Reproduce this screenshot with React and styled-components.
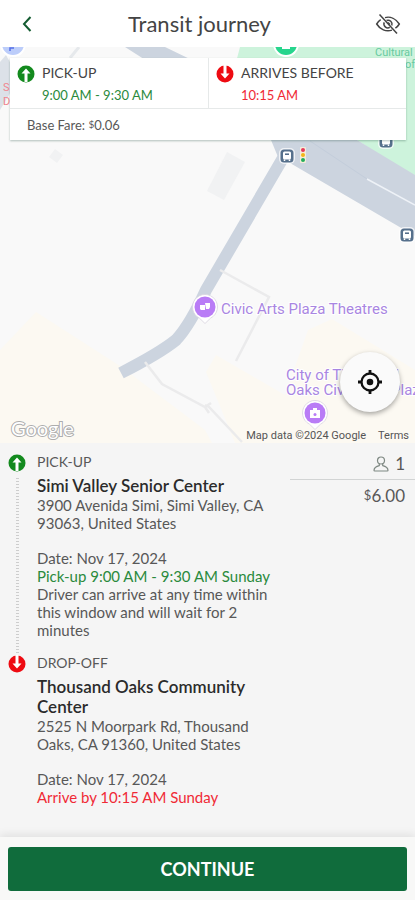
import React from 'react'
import styled, { createGlobalStyle } from 'styled-components'

//--Styles
const GlobalStyle = createGlobalStyle`
  * {
    box-sizing: border-box;
  }
  body {
    margin: 0;
    background: #f5f5f5;
    color: #585858;
    font-family: Lato, 'Open Sans', sans-serif;
  }
  h1, h2, h3, p {
    margin: 0;
  }
  button {
    font-family: inherit;
    border: 0;
    padding: 0;
    cursor: pointer;
  }
`
const Page = styled.div`
  display: flex;
  flex-direction: column;
  min-height: 100vh;
`
const HeaderTag = styled.header`
  display: flex;
  justify-content: space-between;
  align-items: center;
  height: 47px;
  padding: 0 14px;
  background: #fff;
`
const IconButton = styled.button`
  display: flex;
  align-items: center;
  justify-content: ${(props) => props.$align || 'center'};
  width: ${(props) => props.$width};
  height: 32px;
  background: none;
`
const Title = styled.h1`
  color: #444;
  font-size: 22px;
  font-weight: 400;
  line-height: 28px;
`
const MapArea = styled.section`
  position: relative;
  height: 396px;
  overflow: hidden;
  background: #f9f9f9;
`
const MapCanvas = styled.svg`
  display: block;
  width: 100%;
  height: 100%;
`
const Summary = styled.div`
  position: absolute;
  top: 11px;
  left: 10px;
  right: 9px;
  background: #fff;
  box-shadow: 0 1px 2px rgba(40, 80, 70, 0.35);
`
const SummaryTimes = styled.div`
  display: grid;
  grid-template-columns: 1fr 1fr;
  border-bottom: 1px solid #e6e9e9;
`
const SummaryTime = styled.div`
  display: flex;
  gap: 7px;
  height: 50px;
  padding: 6px 7px;

  & + & {
    border-left: 1px solid #e6e9e9;
  }
`
const SummaryLabel = styled.h2`
  color: #444;
  font-size: 14px;
  font-weight: 400;
  line-height: 18px;
`
const SummaryValue = styled.p`
  color: ${(props) => props.$color};
  font-size: 13px;
  line-height: 18px;
  padding-top: 4px;
`
const BaseFare = styled.p`
  padding: 6px 17px;
  font-size: 13px;
  line-height: 18px;
`
const StepIcon = styled.svg`
  display: block;
  flex: none;
  width: 18px;
  height: 18px;
  margin-top: 1px;
`
const LocateButton = styled.button`
  position: absolute;
  right: 15px;
  bottom: 31px;
  display: flex;
  align-items: center;
  justify-content: center;
  width: 60px;
  height: 60px;
  border-radius: 50%;
  background: #fafafa;
  box-shadow: 0 2px 5px rgba(0, 0, 0, 0.35);
`
const MapLegal = styled.div`
  position: absolute;
  right: 6px;
  bottom: 0;
  display: flex;
  gap: 12px;
  color: #555;
  font-family: Roboto, sans-serif;
  font-size: 11px;
  line-height: 15px;

  a {
    color: inherit;
    text-decoration: none;
  }
`
const Details = styled.main`
  display: flex;
  justify-content: space-between;
  align-items: flex-start;
  flex: 1;
  padding: 10px 0 16px 8px;
`
const Steps = styled.div`
  flex: 1;
  max-width: 270px;
`
const Step = styled.section`
  display: flex;
  gap: 11px;
`
const Rail = styled.div`
  display: flex;
  flex-direction: column;
  align-items: center;
  gap: 6px;
`
const Dots = styled.span`
  flex: 1;
  width: 3px;
  background: repeating-linear-gradient(#cdcdcd 0 1px, transparent 1px 3px);
`
const StepBody = styled.div`
  padding-bottom: 15px;
  font-size: 15px;
  line-height: 18px;
`
const StepLabel = styled.h2`
  font-size: 14px;
  font-weight: 400;
  line-height: 18px;
  padding-bottom: 5px;
`
const StepPlace = styled.h3`
  color: #2b2b2b;
  font-size: 17px;
  font-weight: 600;
  line-height: 20px;
`
const StepInfo = styled.div`
  padding-top: 17px;
`
const Highlight = styled.p`
  color: ${(props) => props.$color};
`
const Fare = styled.aside`
  width: 125px;
  text-align: right;
  font-size: 17px;
  line-height: 22px;
`
const FareRow = styled.div`
  display: flex;
  justify-content: flex-end;
  align-items: center;
  gap: 6px;
  padding: 0 10px 4px;

  & + & {
    border-top: 1px solid #d2d4d4;
    padding-top: 4px;
  }
`
const Price = styled.span`
  small {
    font-size: ${(props) => props.$sign};
    vertical-align: 2px;
  }
`
const Footer = styled.footer`
  padding: 10px 8px;
  background: #f8f8f7;
  box-shadow: 0 -3px 8px rgba(0, 0, 0, 0.08);
`
const ContinueButton = styled.button`
  display: block;
  width: 100%;
  height: 44px;
  border-radius: 3px;
  background: #106c3c;
  color: #fff;
  font-size: 18px;
  font-weight: 700;
`

const green = '#2a8a3c'
const red = '#f02a35'

//--Icons
const UpIcon = () => (
  <StepIcon viewBox="0 0 18 18" aria-hidden="true">
    <circle cx="9" cy="9" r="8.500" fill="#138a1e" />
    <path d="M9 3.500 13.500 8.500h-3V17h-3V8.500h-3z" fill="#fff" />
  </StepIcon>
)

const DownIcon = () => (
  <StepIcon viewBox="0 0 18 18" aria-hidden="true">
    <circle cx="9" cy="9" r="8.500" fill="#ee0b12" />
    <path d="M7.500 0h3v8.500h3L9 13.500 4.500 8.500h3z" fill="#fff" />
  </StepIcon>
)

const BackIcon = () => (
  <svg width="10" height="16" viewBox="0 0 10 16" aria-hidden="true">
    <path d="M8.500 1 2 8l6.500 7" fill="none" stroke="#145c31" strokeWidth="2" />
  </svg>
)

const EyeOffIcon = () => (
  <svg width="26" height="22" viewBox="0 0 26 22" fill="none" stroke="#444" strokeWidth="1.500" aria-hidden="true">
    <path d="M4.500 1.500 22 20.500" />
    <path d="M10 4.600c5.500-1.500 11 1.300 14.300 6.400-1 1.700-2.300 3.100-3.900 4.200M17 17.100C11 19 5 16.500 1.700 11c1-1.700 2.300-3.200 4-4.300" />
    <path d="M11.500 7.500a4 4 0 0 1 5.300 5M14.800 14.400a4 4 0 0 1-5.600-5M13 9.500l2 2" />
  </svg>
)

const LocateIcon = () => (
  <svg width="26" height="26" viewBox="0 0 26 26" fill="none" stroke="#111" aria-hidden="true">
    <circle cx="13" cy="13" r="8.500" strokeWidth="2.300" />
    <circle cx="13" cy="13" r="3.300" fill="#111" stroke="none" />
    <path d="M13 1v4M13 21v4M1 13h4M21 13h4" strokeWidth="2.800" />
  </svg>
)

const PersonIcon = () => (
  <svg width="16" height="16" viewBox="0 0 16 16" fill="none" stroke="#7f8983" strokeWidth="1.200" role="img" aria-label="Passengers">
    <circle cx="8" cy="4.500" r="3.500" />
    <path d="M6.300 7.600v2C3.200 10.300 1.200 11.700 1 14.200c0 .5.300.8.800.8h12.400c.5 0 .8-.3.800-.8-.2-2.500-2.200-3.900-5.300-4.600v-2" />
  </svg>
)

const BusStop = ({ x, y }) => (
  <g transform={`translate(${x} ${y})`}>
    <rect x="-8" y="-8" width="16" height="16" rx="5" fill="#fff" fillOpacity="0.700" />
    <rect x="-6.500" y="-6.500" width="13" height="13" rx="3.500" fill="#56708c" />
    <rect x="-4" y="-4.500" width="8" height="8" rx="1.500" fill="#fff" />
    <path d="M-2-1.800h4" stroke="#4b6684" strokeWidth="1.500" />
    <path d="M-2.500 3.500v1.500M2.500 3.500v1.500" stroke="#fff" strokeWidth="1.500" />
  </g>
)

const Pin = ({ x, y, children }) => (
  <g transform={`translate(${x} ${y})`}>
    <path
      d="M0 16.500-5.500 11.200A12.500 12.500 0 1 1 5.500 11.200z"
      fill="#fff"
      stroke="#d9d4df"
      strokeWidth="0.800"
    />
    <circle r="10.500" fill="#b97cf6" />
    {children}
  </g>
)

const StreetMap = () => (
  <MapCanvas viewBox="0 47 415 396" preserveAspectRatio="xMidYMid slice" role="img" aria-label="Map">
    <rect y="47" width="415" height="396" fill="#f9f9f9" />
    {/* sand coloured blocks */}
    <path d="M36 312 120 366 205 430 212 443H0V350z" fill="#fcf9f2" />
    <path d="M206 372 216 355 285 395 308 330 332 319 415 370V443H235z" fill="#fcf9f2" />
    {/* park */}
    <path d="M240 47H415V178L357 140 300 104H225z" fill="#cdf3dc" />
    {/* main street */}
    <path d="M0 62 6 55 12 66v24L0 110z" fill="#dce1e8" />
    <path d="M125 47h40L357 140 415 175v61L290 163 278 157 271 140z" fill="#ccd4df" />
    <path d="m310 141 57 38" stroke="#c3cddb" />
    <path d="m367 179 48 26" stroke="#eef2f7" strokeWidth="1.500" />
    <path d="M79 47 70 58" stroke="#e6e9ec" strokeWidth="3" />
    {/* side street */}
    <path
      d="M283 158 206 290Q190 325 176 340 160 353 121 373"
      fill="none"
      stroke="#ccd4df"
      strokeWidth="12"
    />
    {/* paths */}
    <g fill="none" stroke="#ebebec" strokeWidth="2.500">
      <path d="m220 270 49 27-33 64" />
      <path d="m145 362 17 22 43 23 6-4M205 407l4 6" />
      <path d="m205 405 4 2 33 35" />
    </g>
    <g fill="#f1f2f3">
      <path d="m227 152 18 10-21 38-17-9z" />
      <path d="m55 149 8 6-6 8-8-6z" />
      <path d="m212 183 5 3-3 6-6-3z" />
    </g>

    <circle cx="13" cy="44" r="13" fill="#fff" />
    <circle cx="13" cy="44" r="11" fill="#bccdfa" />
    <path d="M10 51v-3h4" stroke="#5570e8" strokeWidth="1.500" fill="none" />
    <circle cx="286" cy="44" r="13" fill="#fff" />
    <circle cx="286" cy="44" r="11" fill="#27d58d" />
    <path d="M282 48h8" stroke="#fff" strokeWidth="2" />

    <BusStop x={287} y={156} />
    <BusStop x={386} y={141} />
    <BusStop x={407} y={235} />
    <rect x="300" y="147" width="6" height="16" rx="1" fill="#f4ecd9" />
    <circle cx="303" cy="150" r="2" fill="#e6395b" />
    <circle cx="303" cy="155" r="2" fill="#f3b518" />
    <circle cx="303" cy="160" r="2" fill="#23ae5c" />

    <Pin x={205} y={307}>
      <path d="M-5-2h5v5h-4l-1-1zM0-4h5v4l-1 2H1z" fill="#fff" />
    </Pin>
    <Pin x={315} y={413}>
      <path d="M-5-3h3v-2h4v2h3v8H-5z" fill="#fff" />
      <circle cy="1.500" r="1.500" fill="#b97cf6" />
    </Pin>

    <g fontFamily="Roboto, sans-serif" fontSize="15" fill="#a986e2" stroke="#fff" strokeWidth="2" paintOrder="stroke">
      <text x="221" y="314">Civic Arts Plaza Theatres</text>
      <text x="286" y="380">City of Thousand</text>
      <text x="286" y="395">Oaks Civic Arts Plaza</text>
    </g>
    <g fontFamily="Roboto, sans-serif" fontSize="11">
      <text x="375" y="56" fill="#67caa0">Cultural</text>
      <text x="405" y="68" fill="#67caa0">of</text>
      <text x="3" y="91" fill="#f0858f">S</text>
      <text x="3" y="105" fill="#f0858f">D</text>
    </g>
    <text
      x="11"
      y="436"
      fontFamily="Lato, sans-serif"
      fontSize="20"
      fontWeight="400"
      fill="#fff"
      stroke="#adadad"
      strokeWidth="2"
      paintOrder="stroke"
    >
      Google
    </text>
  </MapCanvas>
)

export const Header = () => (
  <HeaderTag>
    <IconButton type="button" aria-label="Back" $width="26px">
      <BackIcon />
    </IconButton>
    <Title>Transit journey</Title>
    <IconButton type="button" aria-label="Hide map" $width="42px" $align="flex-end">
      <EyeOffIcon />
    </IconButton>
  </HeaderTag>
)

const JourneyMap = () => (
  <MapArea>
    <StreetMap />
    <Summary>
      <SummaryTimes>
        <SummaryTime>
          <UpIcon />
          <div>
            <SummaryLabel>PICK-UP</SummaryLabel>
            <SummaryValue $color={green}>9:00 AM - 9:30 AM</SummaryValue>
          </div>
        </SummaryTime>
        <SummaryTime>
          <DownIcon />
          <div>
            <SummaryLabel>ARRIVES BEFORE</SummaryLabel>
            <SummaryValue $color={red}>10:15 AM</SummaryValue>
          </div>
        </SummaryTime>
      </SummaryTimes>
      <BaseFare>
        Base Fare: <Price $sign="10px"><small>$</small>0.06</Price>
      </BaseFare>
    </Summary>
    <LocateButton type="button" aria-label="My location">
      <LocateIcon />
    </LocateButton>
    <MapLegal>
      <span>Map data ©2024 Google</span>
      <a href="#terms">Terms</a>
    </MapLegal>
  </MapArea>
)

const App = () => {
  return (
    <>
      <GlobalStyle />
      <Page>
        <Header />
        <JourneyMap />
        <Details>
          <Steps>
            <Step>
              <Rail>
                <UpIcon />
                <Dots />
              </Rail>
              <StepBody>
                <StepLabel>PICK-UP</StepLabel>
                <StepPlace>Simi Valley Senior Center</StepPlace>
                <p>3900 Avenida Simi, Simi Valley, CA 93063, United States</p>
                <StepInfo>
                  <p>Date: Nov 17, 2024</p>
                  <Highlight $color={green}>Pick-up 9:00 AM - 9:30 AM Sunday</Highlight>
                  <p>Driver can arrive at any time within this window and will wait for 2 minutes</p>
                </StepInfo>
              </StepBody>
            </Step>
            <Step>
              <Rail>
                <DownIcon />
              </Rail>
              <StepBody>
                <StepLabel>DROP-OFF</StepLabel>
                <StepPlace>Thousand Oaks Community Center</StepPlace>
                <p>2525 N Moorpark Rd, Thousand Oaks, CA 91360, United States</p>
                <StepInfo>
                  <p>Date: Nov 17, 2024</p>
                  <Highlight $color={red}>Arrive by 10:15 AM Sunday</Highlight>
                </StepInfo>
              </StepBody>
            </Step>
          </Steps>
          <Fare>
            <FareRow>
              <PersonIcon />
              <span>1</span>
            </FareRow>
            <FareRow>
              <Price $sign="13px"><small>$</small>6.00</Price>
            </FareRow>
          </Fare>
        </Details>
        <Footer>
          <ContinueButton type="button">CONTINUE</ContinueButton>
        </Footer>
      </Page>
    </>
  )
}

export default App
